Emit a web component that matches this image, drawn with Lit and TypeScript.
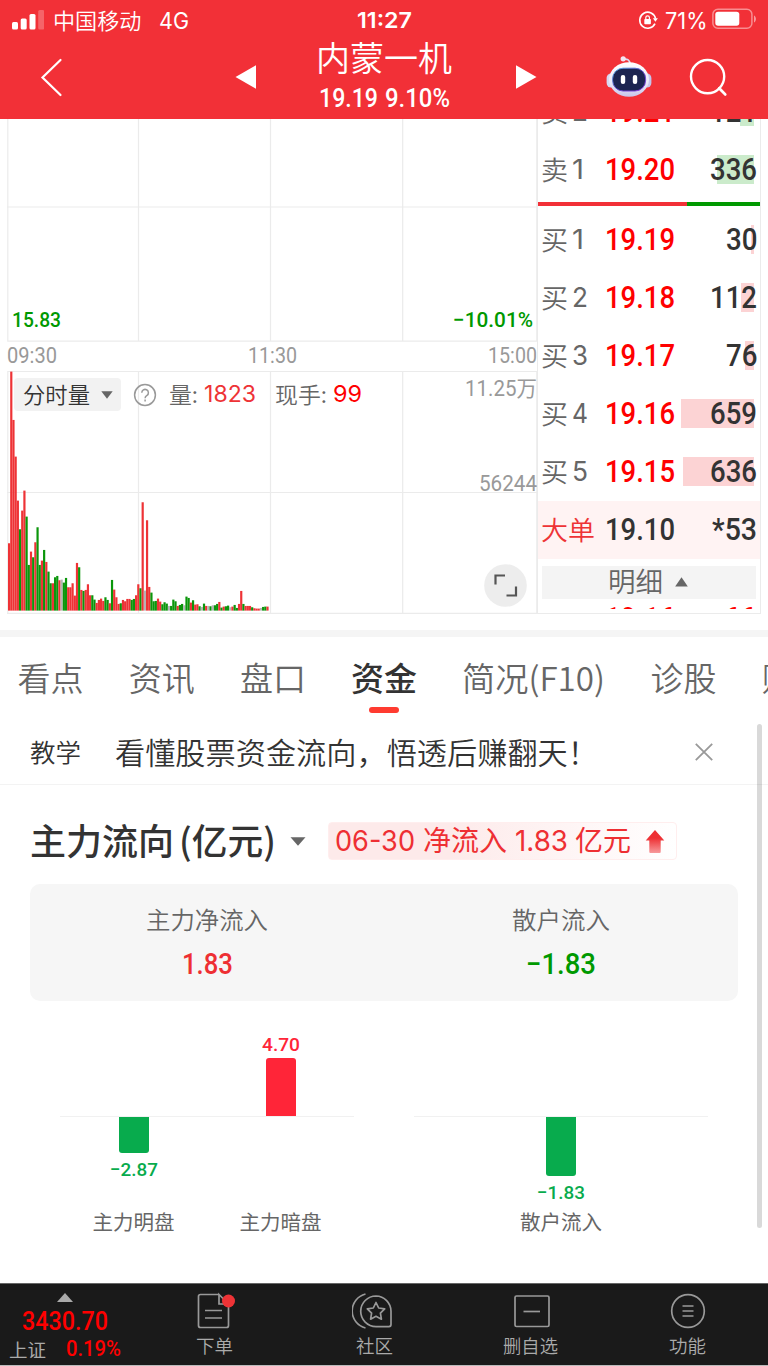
import { LitElement, html, css, svg } from "lit";
import { customElement, property } from "lit/decorators.js";
import { styleMap } from "lit/directives/style-map.js";

/** A single line of text condensed or widened to a given advance width. */
@customElement("fit-text")
class FitText extends LitElement {
  @property({ type: Number }) w = 0;
  @property() text = "";

  static styles = css`
    :host {
      display: inline-block;
      flex: none;
      white-space: pre;
      line-height: 1.2;
      text-align: left;
    }
    .inner {
      display: inline-block;
      transform-origin: 0 50%;
    }
  `;

  render() {
    return html`<span class="inner">${this.text}</span>`;
  }

  updated() {
    this.fit();
    document.fonts?.ready.then(() => this.fit());
  }

  private fit() {
    const el = this.renderRoot.querySelector<HTMLElement>(".inner");
    if (!el) return;
    el.style.transform = "none";
    const natural = el.getBoundingClientRect().width;
    this.style.width = `${this.w}px`;
    if (natural > 0) el.style.transform = `scaleX(${this.w / natural})`;
  }
}

const fit = (text: string, w: number, cls = "") =>
  html`<fit-text class=${cls} .text=${text} .w=${w}></fit-text>`;

type Bar = [number, "r" | "g" | "n"];

// Minute volume bars: height in thirds of a pixel, direction.
const VOLUME: Bar[] = (
  "202r 717r 572r 462r 330r 244g 300r 360r 282g 137g 177r 160g 205r 250g 137g 150r 182g 146r 117g 82g " +
  "82r 100g 104g 91r 93n 84g 98g 70r 70r 82r 45r 143r 130g 62r 59g 62r 79r 46r 46g 33g " +
  "23r 32r 36r 29r 40g 32g 22r 92g 63r 40r 20r 22g 32r 28r 35r 35r 32g 35g 46r 79r " +
  "67g 325r 60n 271r 71r 54g 28g 29g 36r 27r 19g 25g 21g 14n 14g 33g 28g 14r 17g 20g " +
  "16n 42g 38g 24r 31g 18r 19r 13g 11n 21g 14r 14n 13g 16n 16g 20g 26r 9g 12r 13g " +
  "15g 10n 12r 17g 8g 20r 59r 20g 14r 14r 14r 10g 7r 6r 6r 8n 11g 12g 12r"
)
  .split(" ")
  .map((s) => [parseInt(s, 10), s.slice(-1)] as Bar);

const BAR_FILL = { r: "#ee3336", g: "#0b960b", n: "#b5b5b5" };

@customElement("status-bar")
class StatusBar extends LitElement {
  static styles = css`
    :host {
      display: flex;
      align-items: center;
      height: 40px;
      padding-left: 12px;
      color: #fff;
    }
    .signal { width: 32px; height: 20px; margin-right: 9px; }
    .carrier { font-size: 22px; margin: -2px 17px 0 0; }
    .net { font: 22.5px Inter, sans-serif; line-height: 1.2; margin-right: 168px; }
    .clock { font: 600 22px Inter, sans-serif; line-height: 1.2; margin-right: 226px; }
    .lock { width: 20px; height: 20px; margin-right: 7px; }
    .pct { font: 22.5px Inter, sans-serif; line-height: 1.2; margin-right: 5px; }
    .battery { width: 46px; height: 22px; margin-top: -2px; }
  `;
  render() {
    return html`
      <svg class="signal" viewBox="0 0 32 20" fill="#fff">
        <rect x="0" y="12" width="6" height="7.5" rx="1.5" />
        <rect x="8.7" y="8.5" width="6" height="11" rx="1.5" />
        <rect x="17.5" y="4" width="6" height="15.5" rx="1.5" />
        <rect x="26.2" y="0" width="6" height="19.5" rx="1.5" opacity=".25" />
      </svg>
      ${fit("中国移动", 88.5, "carrier")} ${fit("4G", 30, "net")}
      ${fit("11:27", 55, "clock")}
      <svg class="lock" viewBox="0 0 20 20" fill="none" stroke="#fff" stroke-width="1.6">
        <path d="M17 13.6A8 8 0 1 1 17.6 8.6" />
        <path d="M14.9 8.2h5l-2.5 3.6z" fill="#fff" stroke="none" />
        <rect x="6.3" y="9" width="6.6" height="5.2" rx=".8" fill="#fff" stroke="none" />
        <path d="M7.8 9.2V7.6a1.8 1.8 0 0 1 3.6 0v1.6" stroke-width="1.2" />
      </svg>
      ${fit("71%", 42.5, "pct")}
      <svg class="battery" viewBox="0 0 46 22">
        <rect x=".9" y="1.2" width="39" height="19" rx="5" fill="none" stroke="#fff" stroke-opacity=".45" stroke-width="1.5" />
        <rect x="3.3" y="3.8" width="24" height="14" rx="2.8" fill="#fff" />
        <path d="M42 7.5c2.6 1.2 2.6 5.8 0 7z" fill="#fff" opacity=".5" />
      </svg>
    `;
  }
}

@customElement("stock-header")
class StockHeader extends LitElement {
  static styles = css`
    :host {
      display: flex;
      height: 79px;
      padding-left: 40px;
      color: #fff;
    }
    .back { width: 24px; height: 40px; margin: 17px 171px 0 0; }
    .prev { width: 22px; height: 24px; margin: 25px 59px 0 0; }
    .next { width: 22px; height: 24px; margin: 25px 69px 0 0; }
    .titles { display: flex; flex-direction: column; width: 136px; margin-right: 63px; align-items: center; }
    .name { font-size: 34px; line-height: 40px; margin-top: -3px; }
    .quote { display: flex; gap: 7px; margin-top: 6px; }
    .num { font: 500 26px Roboto, sans-serif; line-height: 30px; }
    .robot { width: 46px; height: 44px; margin: 15px 37px 0 0; }
    .search { width: 40px; height: 40px; margin-top: 18px; }
  `;
  render() {
    return html`
      <svg class="back" viewBox="0 0 24 40" fill="none" stroke="#fff" stroke-width="2.2">
        <path d="M20.5 3 2.5 20.5 20.5 38" stroke-linecap="round" />
      </svg>
      <svg class="prev" viewBox="0 0 22 24"><path d="M.5 12 21 .2v23.6z" fill="#fff" /></svg>
      <div class="titles">
        ${fit("内蒙一机", 136, "name")}
        <div class="quote">${fit("19.19", 59, "num")} ${fit("9.10%", 65, "num")}</div>
      </div>
      <svg class="next" viewBox="0 0 22 24"><path d="M21.5 12 1 .2v23.6z" fill="#fff" /></svg>
      <svg class="robot" viewBox="0 0 46 44">
        <defs>
          <linearGradient id="shell" x1="0" y1="0" x2="0" y2="1">
            <stop offset="0" stop-color="#fff" />
            <stop offset=".6" stop-color="#e9e8f7" />
            <stop offset="1" stop-color="#c8c6ea" />
          </linearGradient>
          <linearGradient id="rim" x1="0" y1="0" x2="1" y2="1">
            <stop offset="0" stop-color="#58b4e6" />
            <stop offset=".5" stop-color="#5a48c8" />
            <stop offset="1" stop-color="#8a3ae0" />
          </linearGradient>
        </defs>
        <path d="M17.5 4.2c4-.6 6.2.8 6.800 5" fill="none" stroke="#dedcf2" stroke-width="1.7" />
        <circle cx="17.2" cy="3.8" r="2.6" fill="#f3e4f1" />
        <rect x=".6" y="18.500" width="9" height="14" rx="4.5" fill="#d8d8f2" />
        <rect x="36.4" y="18.500" width="9" height="14" rx="4.5" fill="#c5c5ec" />
        <ellipse cx="23" cy="24.5" rx="20" ry="17.3" fill="url(#shell)" />
        <rect x="6.6" y="13.2" width="33" height="22.8" rx="10.5" fill="#1c2450" stroke="url(#rim)" stroke-width="1" />
        <rect x="14.8" y="20" width="4.4" height="9" rx="2.1" fill="#fff" />
        <rect x="26.8" y="20" width="4.4" height="9" rx="2.1" fill="#fff" />
      </svg>
      <svg class="search" viewBox="0 0 40 40" fill="none" stroke="#fff" stroke-width="2.4">
        <circle cx="18.6" cy="18.6" r="16.6" />
        <path d="m30.2 30.2 6 6.2" stroke-linecap="round" stroke-width="2.8" />
      </svg>
    `;
  }
}

@customElement("minute-chart")
class MinuteChart extends LitElement {
  static styles = css`
    :host { display: block; width: 530px; margin-left: 7px; }
    .price, .volume { display: grid; }
    .price > *, .volume > * { grid-area: 1 / 1; }
    .price { height: 223px; }
    .volume { height: 243px; }
    .grid { display: block; width: 530px; height: 100%; }
    .limits {
      display: flex; justify-content: space-between; align-items: flex-end;
      padding: 0 4px 8.5px 5px; color: #090; font: 500 21px Roboto, sans-serif;
    }
    .times {
      display: flex; justify-content: space-between; align-items: center;
      height: 29px; color: #999; font: 21.5px Roboto, sans-serif;
    }
    .times fit-text { margin-top: -2px; }
    .overlay { display: flex; flex-direction: column; justify-content: space-between; }
    .top { display: flex; align-items: flex-start; height: 50px; }
    .picker {
      display: flex; align-items: center; box-sizing: border-box; height: 33px; width: 107px;
      margin: 7px 0 0 7px; padding-left: 9px; border-radius: 4px; background: #f2f2f2; color: #333; font-size: 22px;
    }
    .picker fit-text { margin-top: -2px; }
    .picker svg { width: 12px; height: 8px; margin-left: 11px; }
    .help { width: 24px; height: 24px; margin: 12px 12px 0; }
    .stat { display: flex; align-items: center; height: 45px; color: #666; font-size: 22px; }
    .num { font: 23px Inter, sans-serif; line-height: 1.2; color: #ee3336; margin: 2px 0 0 6px; }
    .hot { color: #f00; }
    .now { margin-left: 19px; }
    .max { color: #999; font: 21.5px Roboto, "Noto Sans CJK SC", sans-serif; line-height: 1.2; margin: 5px 0 0 auto; }
    .mid { color: #999; font: 21.5px Roboto, sans-serif; line-height: 26px; height: 26px; margin: 50px 0 0 auto; }
    .expand { width: 43px; height: 43px; margin: auto 10px 7px auto; }
  `;
  render() {
    return html`
      <div class="price">
        <svg class="grid" viewBox="0 0 530 223" fill="none" stroke="#ebebeb" stroke-width="1.2">
          <path d="M.8 0V222.2H529.8V0M131.5 0V222M263.5 0V222M395.7 0V222M0 88H530" />
        </svg>
        <div class="limits">${fit("15.83", 49)} ${fit("−10.01%", 80)}</div>
      </div>
      <div class="times">${fit("09:30", 50)} ${fit("11:30", 49)} ${fit("15:00", 49)}</div>
      <div class="volume">
        <svg class="grid" viewBox="0 0 530 243" fill="none" stroke="#ebebeb" stroke-width="1.2">
          <path d="M.8 243V.5H529.8V243M131.5 0V242M263.5 0V242M395.7 0V242M0 121.5H530M0 242.3H530" />
          ${VOLUME.map(
            ([h, c], i) => svg`<rect x=${1 + i * 2.19} y=${239.6 - h / 3} width="2.19" height=${h / 3} fill=${BAR_FILL[c]} stroke="none" />`
          )}
        </svg>
        <div class="overlay">
          <div class="top">
            <div class="picker">
              ${fit("分时量", 67)}
              <svg viewBox="0 0 12 8"><path d="M.3.3h11.4L6 7.8z" fill="#666" /></svg>
            </div>
            <svg class="help" viewBox="0 0 24 24" fill="none" stroke="#999" stroke-width="1.5">
              <circle cx="12" cy="12" r="10.4" />
              <path d="M8.8 9.8a3.3 3.3 0 1 1 5.2 2.6c-1.2.8-1.9 1.3-1.9 2.8M12.1 16.6v1.8" />
            </svg>
            <div class="stat">${fit("量:", 29)} ${fit("1823", 52, "num")}</div>
            <div class="stat now">${fit("现手:", 52)} ${fit("99", 29, "num hot")}</div>
            ${fit("11.25万", 72, "max")}
          </div>
          ${fit("56244", 58, "mid")}
          <svg class="expand" viewBox="0 0 43 43" fill="none" stroke="#555" stroke-width="2.2">
            <circle cx="21.5" cy="21.5" r="21.3" fill="#ededed" stroke="none" />
            <path d="M11.5 20.5v-9H21M32 22.5v9H22.5" />
          </svg>
        </div>
      </div>
    `;
  }
}

@customElement("order-book")
class OrderBook extends LitElement {
  static styles = css`
    :host {
      display: flex; flex-direction: column; box-sizing: border-box; flex: none;
      width: 224px; height: 495px; overflow: hidden;
      border: solid #ebebeb; border-width: 0 1.3px 1.3px 1px;
    }
    .row {
      display: flex; align-items: center; flex: none; height: 58px; padding: 0 3px 0 3px;
      color: #666; font-size: 26.5px;
    }
    .first { margin-top: -36.5px; }
    .label { display: flex; align-items: center; gap: 4px; width: 64px; margin-top: -1px; }
    .idx { font: 27px Inter, sans-serif; line-height: 1.2; margin-top: 2px; }
    .num { font: 500 31px Roboto, sans-serif; line-height: 1.2; margin-top: 1px; }
    .up { color: #f00; }
    .dark { color: #333; }
    .vol { display: grid; flex: 1; justify-items: end; align-items: center; }
    .vol > * { grid-area: 1 / 1; }
    .depth { height: 29px; margin-right: 3px; background: #fcd3d4; }
    .ask { background: #cbebcb; }
    .split { display: flex; flex: none; height: 4px; margin: 3.5px 0 4.5px; }
    .bid-share { width: 149px; background: #f23037; }
    .ask-share { flex: 1; background: #090; }
    .big { background: #fff3f3; }
    .big .label { color: #ee3336; }
    .detail {
      display: flex; flex: none; align-items: center; justify-content: center; gap: 12px;
      height: 33px; margin: 7px 4px 0; padding-right: 3px; background: #f4f4f4; color: #666; font-size: 27px;
    }
    .detail fit-text { margin-top: -1px; }
    .detail svg { width: 13px; height: 10px; }
    .cut { display: flex; height: 4px; margin-top: 6px; padding: 0 4px 0 67px; flex: none; overflow: hidden; justify-content: space-between; }
    .cut .num { margin-top: -5px; height: 9px; line-height: 37px; }
  `;
  private row(name: string, idx: string, price: string, vol: string, volW: number, depth: number, ask = false, cls = "") {
    return html`<div class="row ${cls}">
      <div class="label">${fit(name, 27)}${fit(idx, idx === "1" ? 12 : 16, "idx")}</div>
      ${fit(price, 70, "num up")}
      <div class="vol">
        <div class="depth ${ask ? "ask" : ""}" style=${styleMap({ width: `${depth}px` })}></div>
        ${fit(vol, volW, "num dark")}
      </div>
    </div>`;
  }
  render() {
    return html`
      ${this.row("卖", "2", "19.21", "121", 47, 14, true, "first")}
      ${this.row("卖", "1", "19.20", "336", 47, 37, true)}
      <div class="split"><div class="bid-share"></div><div class="ask-share"></div></div>
      ${this.row("买", "1", "19.19", "30", 31.5, 3)}
      ${this.row("买", "2", "19.18", "112", 47, 13)}
      ${this.row("买", "3", "19.17", "76", 31.5, 9)}
      ${this.row("买", "4", "19.16", "659", 47, 73)}
      ${this.row("买", "5", "19.15", "636", 47, 71)}
      <div class="row big">
        <div class="label">${fit("大单", 54)}</div>
        ${fit("19.10", 70, "num dark")}
        <div class="vol">${fit("*53", 45, "num dark")}</div>
      </div>
      <div class="detail">
        ${fit("明细", 55)}
        <svg viewBox="0 0 13 10"><path d="M6.5.3 12.8 9.6H.2z" fill="#666" /></svg>
      </div>
      <div class="cut">${fit("19.16", 70, "num up")} ${fit("66", 32, "num up")}</div>
    `;
  }
}

@customElement("info-tabs")
class InfoTabs extends LitElement {
  static styles = css`
    :host {
      display: flex; gap: 45.2px; height: 88px; padding-left: 17.5px; overflow: hidden;
      border-top: 7px solid #f5f5f5; color: #666; font-size: 33px;
    }
    .tab { display: flex; flex-direction: column; flex: none; align-items: center; padding-top: 19.5px; }
    .name { line-height: 40px; }
    .active .name { color: #333; font-weight: 500; }
    .mark { width: 30px; height: 6px; border-radius: 3px; margin-top: 10.5px; }
    .active .mark { background: #ff3b30; }
  `;
  render() {
    const tabs: [string, number][] = [
      ["看点", 66], ["资讯", 66], ["盘口", 66], ["资金", 66], ["简况(F10)", 143], ["诊股", 66], ["财务", 66],
    ];
    return tabs.map(
      ([t, w]) => html`<div class="tab ${t === "资金" ? "active" : ""}">${fit(t, w, "name")}<div class="mark"></div></div>`
    );
  }
}

@customElement("fund-flow")
class FundFlow extends LitElement {
  static styles = css`
    :host { display: block; color: #333; }
    .lesson {
      display: flex; align-items: center; box-sizing: border-box; height: 60px; padding: 0 54px 7px 30px;
      border-bottom: 1.5px solid #f3f3f3; font-size: 30px;
    }
    .tag { font-size: 25.5px; margin-right: 34px; }
    .close { width: 20px; height: 20px; margin: 2px 0 0 auto; }
    .head { display: flex; align-items: center; height: 38px; margin: 37px 0 0 30px; font-size: 36px; font-weight: 500; }
    .title { margin-top: -3px; }
    .unit { margin: -3px 0 0 5px; }
    .caret { width: 16px; height: 9px; margin: 0 22px 0 14px; }
    .badge {
      display: flex; align-items: center; box-sizing: border-box; width: 349px; height: 38px; padding: 0 11px 0 6px;
      justify-content: space-between; border: 1px solid #ffeeee; border-radius: 4px;
      background: linear-gradient(90deg, #fdeaea, #fdeaea 35%, #fff); color: #ee2f33; font-size: 28px; font-weight: 400;
    }
    .words { display: flex; align-items: center; }
    .latin { font: 28.5px Inter, sans-serif; line-height: 1.2; }
    .flow { margin: -2px 8px 0; }
    .yi { margin: -2px 0 0 7px; }
    .arrow { width: 20px; height: 25px; }
    .card { display: flex; height: 117px; margin: 24px 30px 0; border-radius: 10px; background: #f6f6f6; }
    .cell { display: flex; flex: 1; flex-direction: column; align-items: center; padding-top: 20px; color: #666; font-size: 24px; }
    .cell fit-text { line-height: 30px; }
    .amount { font: 500 29px Roboto, sans-serif; margin-top: 15px; }
    .pos { color: #ee2f33; }
    .neg { color: #090; }
    .charts { display: flex; gap: 60px; height: 282px; padding-left: 60px; }
    .chart { display: flex; width: 294px; }
    .col { display: flex; flex: 1; flex-direction: column; align-items: center; font: 19px Roboto, sans-serif; }
    .above, .below { display: flex; flex-direction: column; align-items: center; width: 100%; }
    .above { box-sizing: border-box; height: 116px; justify-content: flex-end; border-bottom: 1.5px solid #f1f1f1; color: #ff2538; }
    .below { height: 91px; color: #08ab4d; }
    .bar { width: 30px; }
    .rise { background: #ff2538; border-radius: 3px 3px 0 0; }
    .fall { background: #08ab4d; border-radius: 0 0 3px 3px; }
    .val { line-height: 24px; font-weight: 500; }
    .above .val { margin-bottom: 1px; }
    .below .val { margin-top: 5px; }
    .cap { color: #666; font: 20.5px "Noto Sans CJK SC", sans-serif; line-height: 26px; }
  `;
  private col(name: string, text: string, w: number, h: number) {
    const size = styleMap({ height: `${h}px` });
    const up = !text.startsWith("−");
    return html`<div class="col">
      <div class="above">${up ? html`${fit(text, w, "val")}<div class="bar rise" style=${size}></div>` : ""}</div>
      <div class="below">${up ? "" : html`<div class="bar fall" style=${size}></div>${fit(text, w, "val")}`}</div>
      ${fit(name, 82, "cap")}
    </div>`;
  }
  render() {
    return html`
      <div class="lesson">
        ${fit("教学", 51, "tag")} ${fit("看懂股票资金流向，悟透后赚翻天！", 483)}
        <svg class="close" viewBox="0 0 20 20" stroke="#999" stroke-width="1.8"><path d="m1.8 1.8 16.4 16.4M18.2 1.8 1.8 18.2" /></svg>
      </div>
      <div class="head">
        ${fit("主力流向", 144, "title")} ${fit("(亿元)", 97, "unit")}
        <svg class="caret" viewBox="0 0 16 9"><path d="M.5.3h15L8 8.8z" fill="#666" /></svg>
        <div class="badge">
          <div class="words">
            ${fit("06-30", 80, "latin")} ${fit("净流入", 84, "flow")} ${fit("1.83", 53, "latin")} ${fit("亿元", 56, "yi")}
          </div>
          <svg class="arrow" viewBox="0 0 20 25">
            <defs>
              <linearGradient id="fade" x1="0" y1="0" x2="0" y2="1">
                <stop offset=".35" stop-color="#ee2f33" />
                <stop offset="1" stop-color="#f79a9c" />
              </linearGradient>
            </defs>
            <path d="M10 1 19.3 11.5H15.7V23q0 1-1 1H5.3q-1 0-1-1V11.5H.7z" fill="url(#fade)" />
          </svg>
        </div>
      </div>
      <div class="card">
        <div class="cell">${fit("主力净流入", 122)} ${fit("1.83", 51, "amount pos")}</div>
        <div class="cell">${fit("散户流入", 98)} ${fit("−1.83", 70, "amount neg")}</div>
      </div>
      <div class="charts">
        <div class="chart">${this.col("主力明盘", "−2.87", 48, 36)} ${this.col("主力暗盘", "4.70", 38, 58)}</div>
        <div class="chart">${this.col("散户流入", "−1.83", 48, 59)}</div>
      </div>
    `;
  }
}

@customElement("bottom-nav")
class BottomNav extends LitElement {
  static styles = css`
    :host {
      display: flex; box-sizing: border-box; height: 83px; background: #1a1a1a; color: #aaa;
      border-top: 1px solid #666; border-bottom: 1px solid #bbb; font-size: 18.5px;
    }
    .index { display: flex; flex-direction: column; align-items: center; width: 130px; color: #f00; font-family: Roboto, sans-serif; font-weight: 500; }
    .tri { width: 16px; height: 9px; margin-top: 9px; }
    .level { font-size: 25.5px; line-height: 30px; margin-top: 3.5px; }
    .line { display: flex; align-items: center; gap: 20px; height: 26px; }
    .sh { color: #aaa; font: 18.5px "Noto Sans CJK SC", sans-serif; line-height: 26px; }
    .chg { font-size: 21.5px; line-height: 26px; margin-top: 1px; }
    .item { display: flex; flex-direction: column; align-items: center; width: 157.7px; box-sizing: border-box; }
    .item:nth-child(2) { padding-left: 3px; }
    .items { display: flex; margin-left: 6px; }
    .item svg { width: 44px; height: 40px; margin-top: 6px; }
    .item fit-text { line-height: 26px; margin-top: 2px; }
  `;
  private item(name: string, w: number, icon: unknown) {
    return html`<div class="item">
      <svg viewBox="0 0 44 40" fill="none" stroke="#999" stroke-width="1.7">${icon}</svg>
      ${fit(name, w)}
    </div>`;
  }
  render() {
    return html`
      <div class="index">
        <svg class="tri" viewBox="0 0 16 9"><path d="M8 0l8 9H0z" fill="#aaa" /></svg>
        ${fit("3430.70", 86, "level")}
        <div class="line">${fit("上证", 37, "sh")} ${fit("0.19%", 55, "chg")}</div>
      </div>
      <div class="items">
        ${this.item("下单", 37, svg`
          <path d="M26 4.5H7.500Q5.500 4.500 5.500 6.500V35.500Q5.500 37.500 7.500 37.500H33.500Q35.500 37.500 35.500 35.500V14L26 4.500V14H35.500" />
          <path d="M12 20.500h17M12 28h17" /><circle cx="35.500" cy="11" r="6.500" fill="#ee3336" stroke="none" />`)}
        ${this.item("社区", 37, svg`
          <path d="M13.500 4A17.500 17.500 0 0 0 13.500 38" />
          <path d="M24 6A15.300 15.300 0 0 0 24 36.600H37Q39 36.600 39 34.600V21.300A15.300 15.300 0 0 0 24 6Z" />
          <path d="m24 12.500 2.700 5.500 6 .9-4.300 4.300 1 6-5.400-2.900-5.400 2.900 1-6-4.300-4.300 6-.9z" stroke-linejoin="round" />`)}
        ${this.item("删自选", 55, svg`<rect x="7" y="6" width="34" height="30.500" rx="1.500" /><path d="M15.500 21.500h16.500" />`)}
        ${this.item("功能", 37, svg`<circle cx="22" cy="21" r="16.300" /><path d="M16.500 16h11M16.500 21h11M16.500 26h11" />`)}
      </div>
    `;
  }
}

@customElement("app-root")
class AppRoot extends LitElement {
  static styles = css`
    :host {
      display: block; position: relative; width: 768px; height: 1366px; overflow: hidden; background: #fff;
      font-family: "Noto Sans CJK SC", sans-serif; font-weight: 350;
    }
    .header { height: 119px; background: #f23037; }
    .market { display: flex; height: 511px; }
    .content { height: 558px; }
    .scroll { position: absolute; left: 757px; top: 724px; width: 5px; height: 504px; border-radius: 3px; background: rgba(0, 0, 0, 0.15); }
  `;
  render() {
    return html`
      <div class="header"><status-bar></status-bar><stock-header></stock-header></div>
      <div class="market"><minute-chart></minute-chart><order-book></order-book></div>
      <info-tabs></info-tabs>
      <div class="content"><fund-flow></fund-flow></div>
      <bottom-nav></bottom-nav>
      <div class="scroll"></div>
    `;
  }
}
